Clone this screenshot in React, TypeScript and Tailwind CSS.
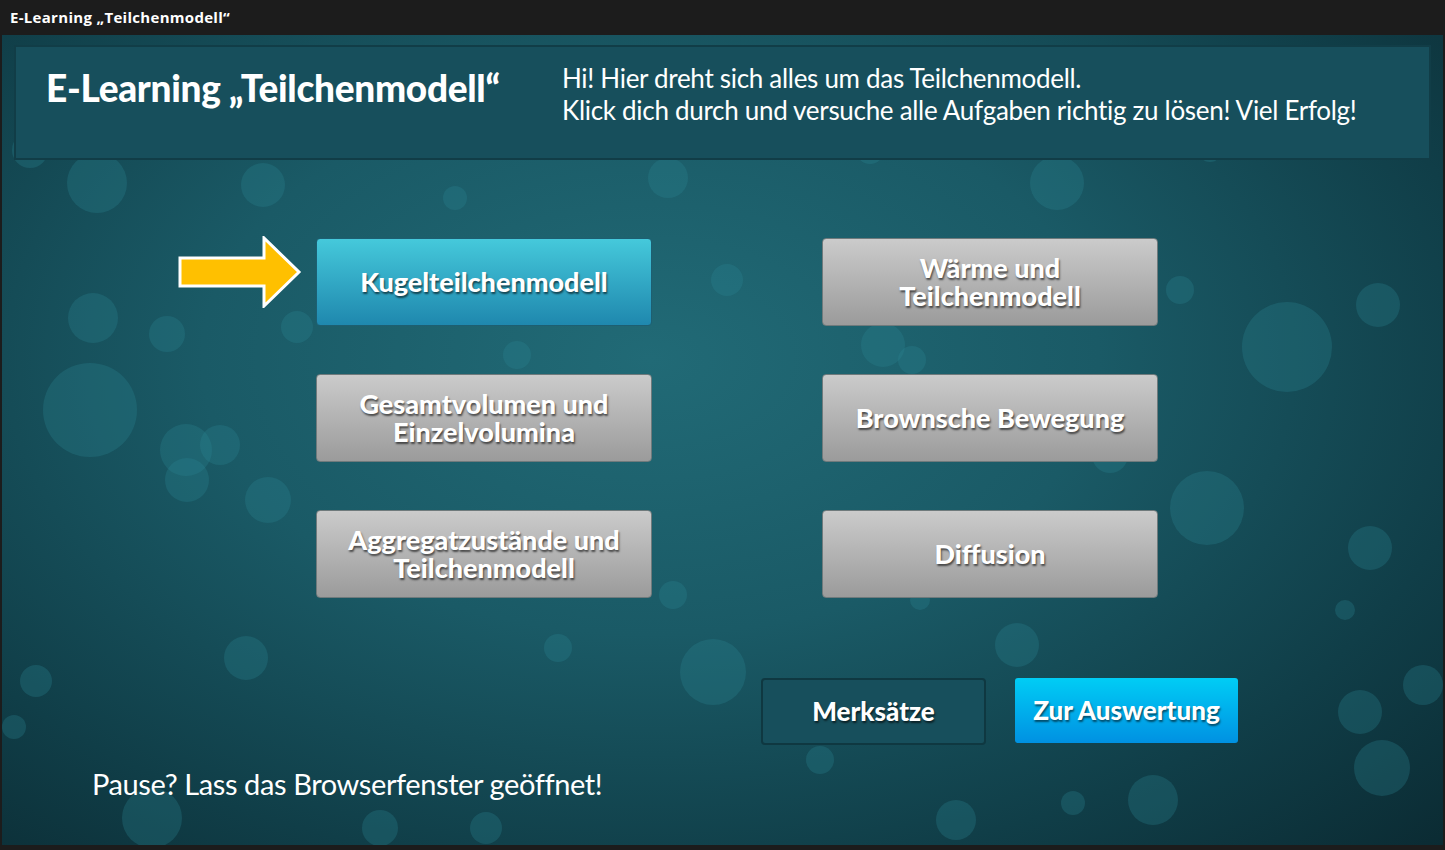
import React from 'react';

const bubbles: [number, number, number][] = [
  [97, 183, 30], [263, 185, 22], [455, 198, 12], [668, 178, 20], [1057, 183, 27],
  [90, 410, 47], [93, 318, 25], [167, 334, 18], [186, 450, 26], [187, 480, 22],
  [220, 445, 20], [268, 500, 23], [297, 327, 16], [727, 280, 16], [517, 355, 14],
  [883, 345, 22], [912, 360, 14], [1287, 347, 45], [1378, 305, 22], [1180, 290, 14],
  [1207, 508, 37], [1370, 548, 22], [1345, 610, 10], [1110, 455, 18], [1017, 645, 22],
  [713, 672, 33], [558, 648, 14], [673, 595, 14], [920, 600, 10], [246, 658, 22],
  [36, 681, 16], [14, 727, 12], [1360, 712, 22], [1423, 685, 20], [1382, 768, 28],
  [1153, 800, 25], [1073, 803, 12], [956, 820, 20], [820, 760, 14], [152, 818, 30],
  [380, 828, 18], [486, 828, 16], [870, 150, 14], [1210, 150, 12], [30, 150, 18],
];

const grayBtn =
  'flex h-[88px] w-[336px] items-center justify-center rounded-[4px] border border-[#6f7a7c] bg-gradient-to-b from-[#cbcbcb] to-[#9b9b9b] text-center text-[27px] font-black leading-[28px] text-white [text-shadow:1px_2px_2px_rgba(0,0,0,0.6)]';

const Arrow = () => (
  <svg width="124" height="72" viewBox="0 0 124 72" className="absolute left-[-138px] top-[-2px]">
    <path
      d="M2 22 H86 V2 L121 36 L86 70 V50 H2 Z"
      fill="#ffc000"
      stroke="#ffffff"
      strokeWidth="3"
      strokeLinejoin="miter"
    />
  </svg>
);

export default function App() {
  return (
    <div className="flex h-[850px] w-[1445px] flex-col bg-[#1c1c1c] font-['Lato',sans-serif]">
      <div className="flex h-[35px] items-center px-[10px] font-['Open_Sans',sans-serif] text-[15px] font-bold tracking-[0.3px] text-white">
        E-Learning „Teilchenmodell“
      </div>
      <div className="relative mx-[2px] mb-[5px] flex-1 overflow-hidden bg-[radial-gradient(ellipse_at_45%_40%,#216a76_0%,#1a5a66_40%,#103e48_75%,#0b2b33_100%)]">
        {bubbles.map(([x, y, r], i) => (
          <div
            key={i}
            className="absolute rounded-full bg-[#2a8393]/30"
            style={{ left: x - 2 - r, top: y - 35 - r, width: r * 2, height: r * 2 }}
          />
        ))}
        <div className="relative flex h-full flex-col">
          <div className="mx-[12px] mt-[10px] flex h-[115px] items-start border-2 border-[#113d47] bg-[#174f5c] pl-[30px] text-white">
            <h1 className="mt-[13px] w-[516px] text-[37px] font-black tracking-[-0.3px]">E-Learning „Teilchenmodell“</h1>
            <p className="mt-[15px] text-[26px] leading-[32px] tracking-[-0.3px]">
              Hi! Hier dreht sich alles um das Teilchenmodell.
              <br />
              Klick dich durch und versuche alle Aufgaben richtig zu lösen! Viel Erfolg!
            </p>
          </div>
          <div className="ml-[314px] mt-[78px] grid w-[842px] grid-cols-[336px_336px] justify-between gap-y-[48px]">
            <div className="relative">
              <Arrow />
              <button className="flex h-[88px] w-[336px] items-center justify-center rounded-[4px] border border-[#1d5f72] bg-gradient-to-b from-[#45c9db] to-[#1f88ae] text-[27px] font-black text-white [text-shadow:1px_2px_2px_rgba(0,0,0,0.6)]">
                Kugelteilchenmodell
              </button>
            </div>
            <button className={grayBtn}>Wärme und<br />Teilchenmodell</button>
            <button className={grayBtn}>Gesamtvolumen und<br />Einzelvolumina</button>
            <button className={grayBtn}>Brownsche Bewegung</button>
            <button className={grayBtn}>Aggregatzustände und<br />Teilchenmodell</button>
            <button className={grayBtn}>Diffusion</button>
          </div>
          <div className="ml-[759px] mt-[80px] flex gap-[29px]">
            <button className="h-[67px] w-[225px] rounded-[4px] border-2 border-[#0f3841] bg-[#174f5c] text-[26px] font-black text-white [text-shadow:1px_2px_2px_rgba(0,0,0,0.6)]">
              Merksätze
            </button>
            <button className="h-[65px] w-[223px] rounded-[3px] bg-gradient-to-b from-[#00cdf5] to-[#0091e2] text-[26px] font-black text-white [text-shadow:1px_2px_2px_rgba(0,0,0,0.55)]">
              Zur Auswertung
            </button>
          </div>
          <p className="ml-[90px] mt-[17px] text-[29px] tracking-[-0.4px] text-white">
            Pause? Lass das Browserfenster geöffnet!
          </p>
        </div>
      </div>
    </div>
  );
}
